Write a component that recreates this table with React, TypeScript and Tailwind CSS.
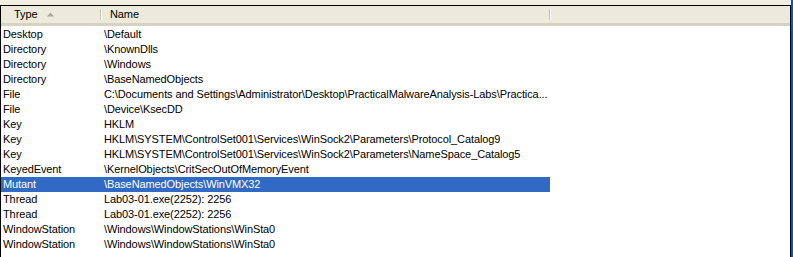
import React from "react";

const rows: [string, string][] = [
  ["Desktop", "\\Default"],
  ["Directory", "\\KnownDlls"],
  ["Directory", "\\Windows"],
  ["Directory", "\\BaseNamedObjects"],
  ["File", "C:\\Documents and Settings\\Administrator\\Desktop\\PracticalMalwareAnalysis-Labs\\Practica..."],
  ["File", "\\Device\\KsecDD"],
  ["Key", "HKLM"],
  ["Key", "HKLM\\SYSTEM\\ControlSet001\\Services\\WinSock2\\Parameters\\Protocol_Catalog9"],
  ["Key", "HKLM\\SYSTEM\\ControlSet001\\Services\\WinSock2\\Parameters\\NameSpace_Catalog5"],
  ["KeyedEvent", "\\KernelObjects\\CritSecOutOfMemoryEvent"],
  ["Mutant", "\\BaseNamedObjects\\WinVMX32"],
  ["Thread", "Lab03-01.exe(2252): 2256"],
  ["Thread", "Lab03-01.exe(2252): 2256"],
  ["WindowStation", "\\Windows\\WindowStations\\WinSta0"],
  ["WindowStation", "\\Windows\\WindowStations\\WinSta0"],
];

export default function App() {
  return (
    <div
      className="flex w-[793px] h-[257px] overflow-hidden bg-white text-[11px] text-black tracking-[-0.1px]"
      style={{ fontFamily: '"Liberation Sans", Arial, sans-serif' }}
    >
      <div className="flex flex-col w-[791px] h-full">
        <div className="h-[5px] bg-[#f1efe2] shrink-0" />
        <div className="flex flex-col flex-1 border-t border-l border-r border-black bg-white">
          <div className="flex h-[20px] shrink-0 bg-[#ebeadb] border-b-[3px] border-[#d6d2c2]">
            <div className="flex items-center w-[99px] shrink-0 pl-[13px] gap-[10px]">
              <span>Type</span>
              <svg width="8" height="5" viewBox="0 0 8 5">
                <polygon points="0,4.5 3.5,0.5 7,4.5" fill="#aca899" />
              </svg>
            </div>
            <div className="w-[1px] shrink-0 my-[3px] bg-[#c7c5b2]" />
            <div className="w-[1px] shrink-0 my-[3px] bg-white" />
            <div className="flex items-center w-[447px] shrink-0 pl-[8px]">Name</div>
            <div className="w-[1px] shrink-0 my-[3px] bg-[#c7c5b2]" />
            <div className="w-[1px] shrink-0 my-[3px] bg-white" />
          </div>
          <div className="flex flex-col pt-[1px]">
            {rows.map(([t, n], i) => {
              const sel = t === "Mutant";
              return (
                <div
                  key={i}
                  className={`flex h-[15px] w-[549px] items-center leading-[15px] whitespace-nowrap ${
                    sel ? "bg-[#316ac5] text-white" : ""
                  }`}
                >
                  <div className="w-[101px] shrink-0 pl-[2px]">{t}</div>
                  <div className="shrink-0 pl-[2px]">{n}</div>
                </div>
              );
            })}
          </div>
        </div>
      </div>
      <div className="w-[2px] h-full bg-[#0054e3]" />
    </div>
  );
}
